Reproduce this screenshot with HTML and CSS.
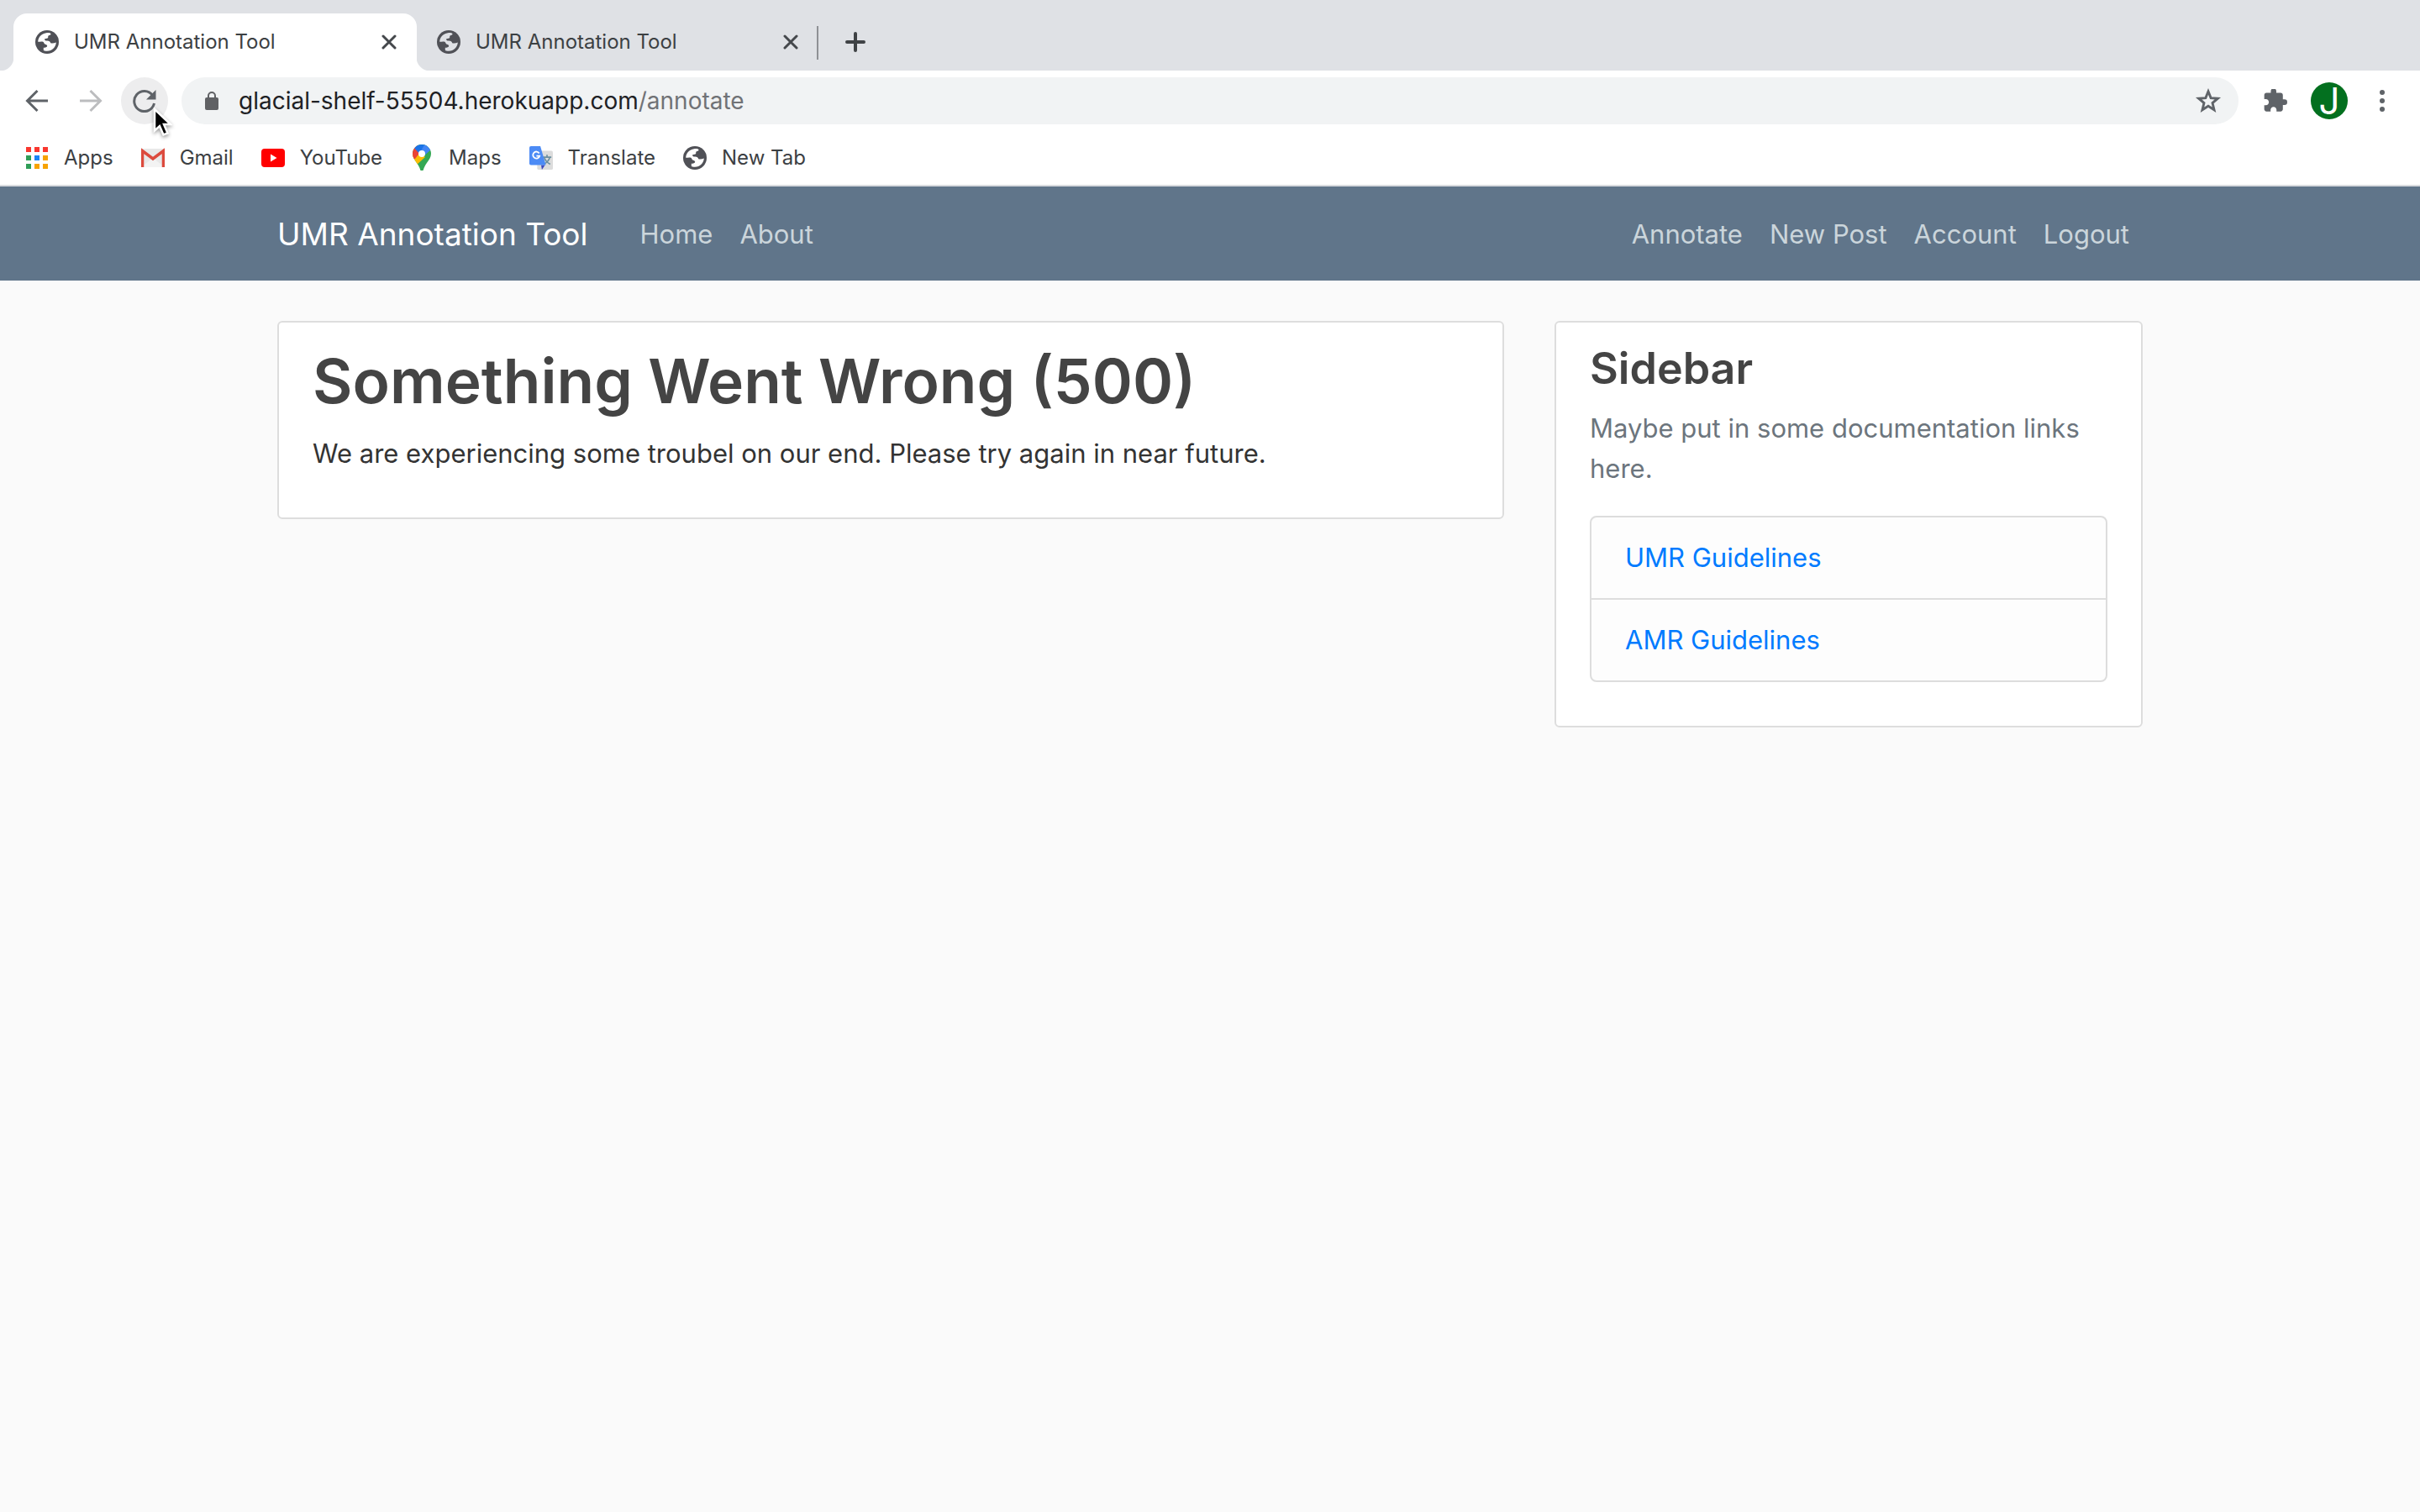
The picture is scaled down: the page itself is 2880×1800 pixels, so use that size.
FILE: index.html
```html
<!DOCTYPE html>
<html lang="en">
<head>
<meta charset="utf-8">
<title>UMR Annotation Tool</title>
<link rel="stylesheet" href="styles.css">
</head>
<body>
<svg class="defs" aria-hidden="true">
  <symbol id="globe" viewBox="0 0 28 28">
    <circle cx="14" cy="14" r="14" fill="#505157"/>
    <path fill="var(--hole)" d="M13 3.200C16 2.800 17.800 3.300 18.600 4.200C18.400 6 16.800 5.600 15.600 6.600C14.600 7.600 16 8.600 14.600 9.400C13 10.200 11.600 9.400 11.200 10.600C10.900 12 12 12.600 13.600 12.600C16.400 12.400 17.600 13.400 18.200 15.200C19.800 15.800 22.400 15.600 24.800 14.600C24.400 20.600 20 24.800 14 24.800C12 24.800 10.200 24.400 9.800 23.800L9.800 20.800C12 20.800 14 20.600 14.200 18.600C14 17.200 12.400 17.200 11.200 16.600C10.200 15.600 10.400 14.400 9.200 13.800C7.400 13.200 5.200 13.800 3.200 13.800C3.300 8.400 7.400 3.900 13 3.200Z"/>
  </symbol>
  <symbol id="close" viewBox="0 0 18 18"><path d="M2 2l14 14M16 2L2 16" stroke="#45484c" stroke-width="3" stroke-linecap="round"/></symbol>
</svg>

<header class="browser">
  <div class="tabs" role="tablist">
    <div class="tab active" role="tab" aria-selected="true">
      <svg class="globe"><use href="#globe"/></svg>
      <span class="tab-title">UMR Annotation Tool</span>
      <button class="close" aria-label="Close tab"><svg><use href="#close"/></svg></button>
    </div>
    <div class="tab" role="tab" aria-selected="false">
      <svg class="globe"><use href="#globe"/></svg>
      <span class="tab-title">UMR Annotation Tool</span>
      <button class="close" aria-label="Close tab"><svg><use href="#close"/></svg></button>
    </div>
    <button class="new-tab" aria-label="New tab"><svg viewBox="0 0 24 24"><path d="M12 2v20M2 12h20" stroke="#3f4245" stroke-width="4" stroke-linecap="round"/></svg></button>
  </div>

  <div class="toolbar">
    <div class="nav-buttons">
      <button class="round" aria-label="Back"><svg viewBox="0 0 28 28"><path d="M27 14H3M14.500 2L2.500 14l12 12" fill="none" stroke="#5f6368" stroke-width="3"/></svg></button>
      <button class="round" aria-label="Forward"><svg viewBox="0 0 28 28"><path d="M1 14h24M13.500 2l12 12-12 12" fill="none" stroke="#bcbdbf" stroke-width="3"/></svg></button>
      <button class="round reload" aria-label="Reload"><svg viewBox="0 0 28 28"><path d="M23.500 7.500A12 12 0 1 0 25.500 17" fill="none" stroke="#5f6368" stroke-width="3"/><path d="M27.500 1v11.500H16z" fill="#5f6368"/></svg>
        <svg class="cursor" viewBox="0 0 24 36"><path d="M3 2v25.500l6-5.500 4.500 10.500 5-2-4.500-10.500h8z" fill="#000" stroke="#fff" stroke-width="2.500"/></svg></button>
    </div>
    <div class="omnibox">
      <svg class="lock" viewBox="0 0 16 22"><rect y="7" width="16" height="15" rx="2" fill="#606164"/><path d="M4 8V5a4 4 0 0 1 8 0v3" fill="none" stroke="#606164" stroke-width="2"/></svg>
      <div class="url" role="textbox" contenteditable="true" spellcheck="false" aria-label="Address">glacial-shelf-55504.herokuapp.com<span class="path">/annotate</span></div>
      <button class="star" aria-label="Bookmark this page"><svg viewBox="0 0 30 30"><path d="M15 4.500l2.900 7.300 7.800.6-6 5 1.900 7.700-6.600-4.200-6.600 4.200 1.900-7.700-6-5 7.800-.6z" fill="none" stroke="#5f6368" stroke-width="2.700"/></svg></button>
    </div>
    <div class="actions">
      <button class="ext" aria-label="Extensions"><svg viewBox="1.500 1.500 21.500 21.500"><path fill="#5f6368" d="M20.500 11H19V7c0-1.100-.9-2-2-2h-4V3.500a2.500 2.500 0 0 0-5 0V5H4c-1.100 0-1.990.9-1.990 2v3.800H3.500c1.490 0 2.700 1.210 2.700 2.700s-1.210 2.700-2.700 2.700H2V20c0 1.100.9 2 2 2h3.800v-1.500c0-1.490 1.210-2.700 2.700-2.700s2.700 1.210 2.700 2.700V22H17c1.100 0 2-.9 2-2v-4h1.500a2.500 2.500 0 0 0 0-5z"/></svg></button>
      <button class="avatar" aria-label="Profile">J</button>
      <button class="menu" aria-label="Menu"><svg viewBox="0 0 6 26"><g fill="#5f6368"><circle cx="3" cy="3" r="3"/><circle cx="3" cy="13" r="3"/><circle cx="3" cy="23" r="3"/></g></svg></button>
    </div>
  </div>

  <nav class="bookmarks" aria-label="Bookmarks">
    <a href="#"><svg viewBox="0 0 28 28"><g fill="#f9372f"><path d="M1 1h6v6H1zM11 1h6v6h-6zM21 1h6v6h-6z"/></g><g fill="#2f9e57"><path d="M1 11h6v6H1zM1 21h6v6H1z"/></g><path fill="#1a84f5" d="M11 11h6v6h-6z"/><path fill="#f7a301" d="M21 11h6v6h-6zM11 21h6v6h-6zM21 21h6v6h-6z"/></svg>Apps</a>
    <a href="#"><svg viewBox="1 2 28 28"><path d="M1 5h28v22H1z" fill="#e8e8e8"/><path d="M1 27l14-11 14 11z" fill="#f3f3f3"/><path d="M2.500 27V7.500L15 17 27.500 7.500V27" fill="none" stroke="#dc4a3d" stroke-width="3.500"/></svg>Gmail</a>
    <a href="#"><svg viewBox="0 0 28 28"><rect y="3" width="28" height="22" rx="4" fill="#f00"/><path d="M11 9.500l7.500 4.500-7.500 4.500z" fill="#fff"/></svg>YouTube</a>
    <a href="#" class="maps"><svg viewBox="0 0 22 32"><clipPath id="pin"><path d="M11 0a11 11 0 0 1 11 11c0 7-7 11-9.500 20h-3C7 22 0 18 0 11A11 11 0 0 1 11 0z"/></clipPath><g clip-path="url(#pin)"><path fill="#34a853" d="M0 0h22v32H0z"/><path fill="#fbbc04" d="M0 10l7 0 8 5L4 25-2 20z"/><path fill="#ea4335" d="M-2 0h6l7 7-8 10-5 0z"/><path fill="#1a73e8" d="M2 4L8-1h8L8 11z"/><path fill="#4285f4" d="M15-1L22 6 13 14 9 9z"/></g><circle cx="11" cy="11" r="4" fill="#fff"/></svg>Maps</a>
    <a href="#"><svg viewBox="0 0 30 30"><rect x="10" y="6" width="20" height="24" rx="2" fill="#dcdcdc"/><path d="M17 14h11M22.500 11v3M26 14c-1 5-4 7-7.500 9M19 14c1 5 4 7 7.500 9" fill="none" stroke="#6b8fa0" stroke-width="1.800"/><path d="M15 24h5l-4 6z" fill="#3a48bd"/><path d="M2 0h12l7 24H2a2 2 0 0 1-2-2V2a2 2 0 0 1 2-2z" fill="#4c8bf5"/><path d="M12.500 9A4.300 4.300 0 1 0 13 12.500H9" fill="none" stroke="#fff" stroke-width="2"/></svg>Translate</a>
    <a href="#"><svg viewBox="0 0 28 28"><use href="#globe"/></svg>New Tab</a>
  </nav>
</header>

<header class="site-header">
  <nav class="container navbar">
    <a class="brand" href="#">UMR Annotation Tool</a>
    <div class="links left"><a href="#">Home</a><a href="#">About</a></div>
    <div class="links"><a href="#">Annotate</a><a href="#">New Post</a><a href="#">Account</a><a href="#">Logout</a></div>
  </nav>
</header>

<main class="container row">
  <section class="card">
    <h1>Something Went Wrong (500)</h1>
    <p>We are experiencing some troubel on our end. Please try again in near future.</p>
  </section>
  <aside class="card">
    <h3>Sidebar</h3>
    <p class="muted">Maybe put in some documentation links here.</p>
    <ul class="list">
      <li><a href="#">UMR Guidelines</a></li>
      <li><a href="#">AMR Guidelines</a></li>
    </ul>
  </aside>
</main>
</body>
</html>
```
FILE: styles.css
```css
*, *::before, *::after { box-sizing: border-box; }

body {
  margin: 0;
  background: #fafafa;
  color: #333;
  font: 31px/48px Inter, "Liberation Sans", sans-serif;
}

a { text-decoration: none; color: #007bff; }
button { border: 0; padding: 0; background: none; font: inherit; color: inherit; display: grid; place-items: center; }
svg { display: block; flex: none; }
.defs { position: absolute; width: 0; height: 0; }

/* Browser frame */
.browser {
  background: #fff;
  border-bottom: 2px solid #d9dbdf;
  color: #3c4043;
  font-size: 24px;
  line-height: 32px;
}

.tabs { display: flex; height: 84px; padding: 16px 16px 0; background: #dfe1e5; }
.tab {
  --hole: #dfe1e5;
  position: relative;
  display: flex;
  align-items: center;
  width: 476px;
  height: 68px;
  padding: 0 22px 0 24px;
}
.tab.active { --hole: #fff; width: 480px; padding: 0 24px 0 26px; background: #fff; border-radius: 16px 16px 0 0; }
.tab.active::before, .tab.active::after {
  content: "";
  position: absolute;
  bottom: 0;
  width: 16px;
  height: 16px;
}
.tab.active::before { left: -16px; background: radial-gradient(circle at 0 0, #dfe1e5 16px, #fff 17px); }
.tab.active::after { right: -16px; background: radial-gradient(circle at 100% 0, #dfe1e5 16px, #fff 17px); }
.tab .globe { width: 28px; height: 28px; margin-right: 18px; }
.tab-title { flex: 1; }
.close svg { width: 18px; height: 18px; }
.new-tab { width: 92px; height: 68px; position: relative; }
.new-tab svg { width: 24px; height: 24px; }
.new-tab::before { content: ""; position: absolute; left: 0; top: 15px; width: 2px; height: 40px; background: #8f9195; }

.toolbar { display: flex; align-items: center; height: 72px; padding: 0 16px; }
.nav-buttons { display: flex; gap: 8px; margin-right: 16px; }
.round { position: relative; width: 56px; height: 56px; border-radius: 28px; }
.round svg { width: 28px; height: 28px; }
.reload { background: #ededee; }
.round .cursor { position: absolute; left: 37px; top: 36px; width: 24px; height: 36px; filter: drop-shadow(0 2px 2px #0006); }
.omnibox { flex: 1; display: flex; align-items: center; height: 56px; padding: 0 20px 0 28px; border-radius: 28px; background: #f1f3f4; }
.lock { width: 16px; height: 22px; margin-right: 24px; }
.url { flex: 1; color: #202124; font-size: 28px; outline: 0; }
.path { color: #707276; }
.star svg { width: 32px; height: 32px; }
.actions { display: flex; align-items: center; gap: 28px; margin: 0 16px 0 30px; }
.ext svg { width: 28px; height: 28px; }
.avatar { width: 44px; height: 44px; border-radius: 50%; background: #03701f; color: #fff; font-size: 44px; line-height: 44px; }
.menu { width: 26px; }
.menu svg { width: 6px; height: 26px; }

.bookmarks { --hole: #fff; display: flex; gap: 31px; height: 64px; padding: 0 28px; align-items: center; }
.bookmarks a { display: flex; align-items: center; gap: 16px; color: #3c4043; }
.bookmarks svg { width: 32px; height: 32px; padding: 2px; }
.bookmarks .maps svg { padding: 0; }

/* Page */
.container { width: 100%; max-width: 2280px; margin: 0 auto; padding: 0 30px; }
.site-header { background: #60758a; }
.navbar { display: flex; align-items: center; height: 112px; padding-top: 2px; }
.brand { margin-right: 46px; color: #fff; font-size: 37px; line-height: 60px; }
.links { display: flex; }
.links.left { flex: 1; }
.links a { padding: 0 16px; color: #cbd5db; }

.row { display: grid; grid-template-columns: minmax(0, 1460fr) minmax(0, 700fr); gap: 60px; align-items: start; margin-top: 48px; }
.card { padding: 22px 40px 20px; border: 2px solid #ddd; border-radius: 6px; background: #fff; }
.card h1 { margin: 0 0 14px; color: #444; font-size: 73px; line-height: 96px; font-weight: 600; }
.card h3 { margin: 0 0 14px; color: #444; font-size: 52px; line-height: 66px; font-weight: 600; }
.card p { margin: 0 0 32px; }
.card .muted { color: #6c757d; }
.list { margin: 0 0 32px; padding: 0; list-style: none; border: 2px solid #ddd; border-radius: 8px; background: #fdfdfd; }
.list li { padding: 24px 40px; }
.list li + li { border-top: 2px solid #ddd; }
```
